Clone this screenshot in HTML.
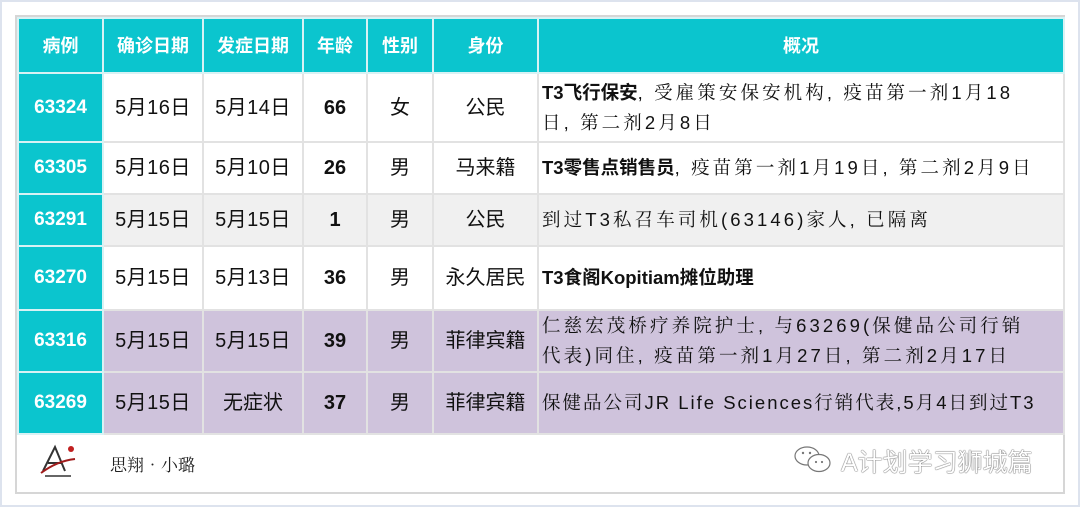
<!DOCTYPE html>
<html><head><meta charset="utf-8"><style>
html,body{margin:0;padding:0}
body{width:1080px;height:507px;background:#fff;position:relative;overflow:hidden;font-family:"Liberation Sans","Noto Sans CJK SC",sans-serif;}
.outer{position:absolute;left:0;top:0;width:1076px;height:503px;border:2px solid #dde3ee;}
.frame{position:absolute;left:15px;top:15px;width:1046px;height:475px;border:2px solid #d6d6d6;background:#fff;}
table{position:absolute;left:17px;top:17px;border-collapse:collapse;table-layout:fixed;}
td{border:2px solid #e2e2e2;text-align:center;font-size:20px;color:#111;padding:0;line-height:26px;vertical-align:middle;}
td.dt{letter-spacing:0.5px}
tr.h td{background:#0bc5ce;color:#fff;font-weight:bold;height:53px;border-color:#d8f2f4;font-size:18px}
td.id{background:#0bc5ce;color:#fff;font-weight:bold;font-size:19px;border-color:#d8f2f4}
td.d{text-align:left;padding-left:3px;font-family:"Liberation Sans","Noto Serif CJK SC",serif;font-size:18.5px;line-height:30px;letter-spacing:3.1px;white-space:nowrap;overflow:hidden}
td.d b{font-family:"Liberation Sans","Noto Sans CJK SC",sans-serif;letter-spacing:0}
td.n{font-weight:bold}
tr.g td:not(.id){background:#f0f0f0}
tr.p td:not(.id){background:#cfc3dc}
.foot{position:absolute;left:17px;top:433px;width:1046px;height:58px;}
</style></head><body>
<div class="outer"></div>
<div class="frame"></div>
<table>
<colgroup><col style="width:85px"><col style="width:100px"><col style="width:100px"><col style="width:64px"><col style="width:66px"><col style="width:105px"><col style="width:526px"></colgroup>
<tr class="h"><td>病例</td><td>确诊日期</td><td>发症日期</td><td>年龄</td><td>性别</td><td>身份</td><td>概况</td></tr>
<tr style="height:69px"><td class="id">63324</td><td class="dt">5月16日</td><td class="dt">5月14日</td><td class="n">66</td><td>女</td><td>公民</td><td class="d"><b>T3飞行保安</b>, 受雇策安保安机构, 疫苗第一剂1月18<br>日, 第二剂2月8日</td></tr>
<tr style="height:52px"><td class="id">63305</td><td class="dt">5月16日</td><td class="dt">5月10日</td><td class="n">26</td><td>男</td><td>马来籍</td><td class="d"><b>T3零售点销售员</b>, 疫苗第一剂1月19日, 第二剂2月9日</td></tr>
<tr class="g" style="height:52px"><td class="id">63291</td><td class="dt">5月15日</td><td class="dt">5月15日</td><td class="n">1</td><td>男</td><td>公民</td><td class="d">到过T3私召车司机(63146)家人, 已隔离</td></tr>
<tr style="height:64px"><td class="id">63270</td><td class="dt">5月15日</td><td class="dt">5月13日</td><td class="n">36</td><td>男</td><td>永久居民</td><td class="d"><b>T3食阁Kopitiam摊位助理</b></td></tr>
<tr class="p" style="height:62px"><td class="id">63316</td><td class="dt">5月15日</td><td class="dt">5月15日</td><td class="n">39</td><td>男</td><td>菲律宾籍</td><td class="d">仁慈宏茂桥疗养院护士, 与63269(保健品公司行销<br>代表)同住, 疫苗第一剂1月27日, 第二剂2月17日</td></tr>
<tr class="p" style="height:62px"><td class="id">63269</td><td class="dt">5月15日</td><td>无症状</td><td class="n">37</td><td>男</td><td>菲律宾籍</td><td class="d" style="letter-spacing:2px">保健品公司JR Life Sciences行销代表,5月4日到过T3</td></tr>
</table>
<div class="foot">
<svg style="position:absolute;left:20px;top:10px" width="46" height="38" viewBox="0 0 46 38"><path d="M6 28 L18 4 L28 28 M11 20 L24 20" stroke="#333" stroke-width="2" fill="none"/><path d="M4 30 Q20 18 38 16" stroke="#a01c1c" stroke-width="2" fill="none"/><circle cx="34" cy="6" r="3" fill="#c02020"/><rect x="8" y="32" width="26" height="2" fill="#666"/></svg>
<div style="position:absolute;left:93px;top:18px;font-family:'Noto Serif CJK SC',serif;font-size:17px;color:#222">思翔•小璐</div>
<svg style="position:absolute;left:776px;top:12px" width="40" height="30" viewBox="0 0 40 30"><ellipse cx="14" cy="11" rx="12" ry="9" fill="#fff" stroke="#777" stroke-width="1.2"/><ellipse cx="26" cy="18" rx="11" ry="8.5" fill="#fff" stroke="#777" stroke-width="1.2"/><circle cx="10" cy="8" r="1.2" fill="#777"/><circle cx="17" cy="8" r="1.2" fill="#777"/><circle cx="23" cy="17" r="1.1" fill="#777"/><circle cx="29" cy="17" r="1.1" fill="#777"/></svg>
<div style="position:absolute;left:824px;top:10px;font-size:25px;color:#fff;text-shadow:0 0 1px #444,0 0 1px #444">A计划学习狮城篇</div>
</div>
</body></html>
